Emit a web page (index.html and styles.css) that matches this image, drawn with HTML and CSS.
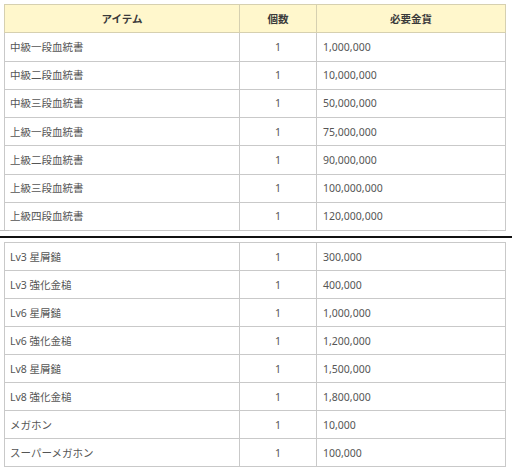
FILE: index.html
```html
<!DOCTYPE html>
<html lang="ja">
<head>
<meta charset="utf-8">
<link rel="stylesheet" href="styles.css">
</head>
<body>
<div class="page">
  <table class="tbl top">
    <colgroup><col class="c1"><col class="c2"><col class="c3"></colgroup>
    <thead>
      <tr><th>アイテム</th><th>個数</th><th>必要金貨</th></tr>
    </thead>
    <tbody>
      <tr><td>中級一段血統書</td><td class="num">1</td><td>1,000,000</td></tr>
      <tr><td>中級二段血統書</td><td class="num">1</td><td>10,000,000</td></tr>
      <tr><td>中級三段血統書</td><td class="num">1</td><td>50,000,000</td></tr>
      <tr><td>上級一段血統書</td><td class="num">1</td><td>75,000,000</td></tr>
      <tr><td>上級二段血統書</td><td class="num">1</td><td>90,000,000</td></tr>
      <tr><td>上級三段血統書</td><td class="num">1</td><td>100,000,000</td></tr>
      <tr><td>上級四段血統書</td><td class="num">1</td><td>120,000,000</td></tr>
    </tbody>
  </table>
  <div class="divider">
    <span class="stub stub-left"></span>
    <span class="stub stub-right"></span>
  </div>
  <table class="tbl bottom">
    <colgroup><col class="c1"><col class="c2"><col class="c3"></colgroup>
    <tbody>
      <tr><td>Lv3 星屑鎚</td><td class="num">1</td><td>300,000</td></tr>
      <tr><td>Lv3 強化金槌</td><td class="num">1</td><td>400,000</td></tr>
      <tr><td>Lv6 星屑鎚</td><td class="num">1</td><td>1,000,000</td></tr>
      <tr><td>Lv6 強化金槌</td><td class="num">1</td><td>1,200,000</td></tr>
      <tr><td>Lv8 星屑鎚</td><td class="num">1</td><td>1,500,000</td></tr>
      <tr><td>Lv8 強化金槌</td><td class="num">1</td><td>1,800,000</td></tr>
      <tr><td>メガホン</td><td class="num">1</td><td>10,000</td></tr>
      <tr><td>スーパーメガホン</td><td class="num">1</td><td>100,000</td></tr>
    </tbody>
  </table>
</div>
</body>
</html>
```
FILE: styles.css
```css
html, body {
  margin: 0;
  padding: 0;
  background: #ffffff;
}
.page {
  padding: 4px 7px 0 4px;
  font-family: "Noto Sans", "Noto Sans CJK JP", sans-serif;
  font-size: 10.5px;
  color: #555555;
}
.tbl {
  width: 501px;
  border-collapse: collapse;
  table-layout: fixed;
}
.c1 { width: 235px; }
.c2 { width: 77px; }
.c3 { width: 189px; }
.tbl th, .tbl td {
  border: 1px solid #c9c9c9;
  padding: 0 5px;
  height: 28px;
  box-sizing: border-box;
  line-height: 14px;
  text-align: left;
  vertical-align: middle;
}
.tbl th {
  background: #fff7cc;
  color: #3a3a3a;
  font-weight: 600;
  text-align: center;
  border-color: #d6d0b0;
}
.top td { height: 28.25px; }
.top th { height: 28.3px; }
.tbl td.num { text-align: center; }
.tbl td:last-child { padding-left: 6px; }
.divider {
  position: relative;
  height: 2px;
  margin: 5px -7px 4px -4px;
  background: #111111;
}
.stub {
  position: absolute;
  background: #bdbdbd;
}
.stub-left {
  left: 0;
  top: -6px;
  width: 9px;
  height: 1px;
}
.stub-right {
  left: 468px;
  top: -6px;
  width: 19px;
  height: 1px;
}
```
